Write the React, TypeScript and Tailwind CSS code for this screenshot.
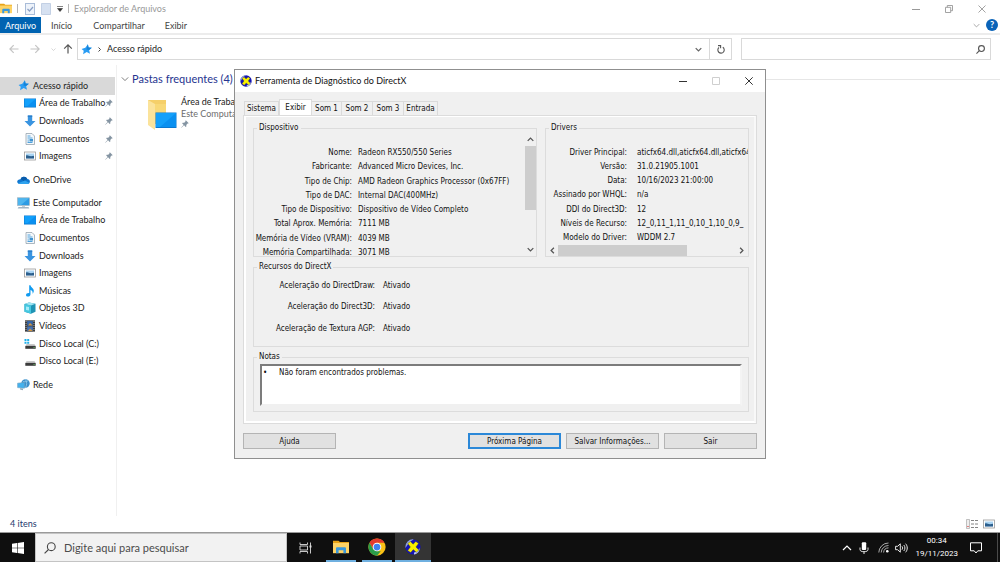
import type { ReactNode } from "react";

/* ---------- icons ---------- */

function StarIcon() {
  return (
    <svg viewBox="0 0 16 16" className="size-[11px] shrink-0">
      <path d="M10 .5 11 5l4.800.3-4 3.600 1.300 5.100-4.800-2.300L3 15l1-5.300L.8 7.200 6.300 5.600z" fill="#2a9df4" />
      <path d="M10 .5 11 5l4.800.3-4 3.600-4-1z" fill="#1583d8" />
    </svg>
  );
}

function DesktopIcon() {
  return (
    <svg viewBox="0 0 12 10" className="w-3 h-[10px] shrink-0">
      <rect x="0" y="0.500" width="12" height="9" fill="#0a78d0" />
      <path d="M.5 1h11v7.500H.5z" fill="#12a0fb" />
      <path d="M11.500 1v7.500H3z" fill="#0b8ff0" />
    </svg>
  );
}

function DownIcon() {
  return (
    <svg viewBox="0 0 12 12" className="size-3 shrink-0">
      <path d="M3.800.5h4.400V6H11.500L6 11.600.5 6h3.300z" fill="#3a94e0" />
      <path d="M3.800.5h4.400V2H3.800z" fill="#2b7fcb" />
    </svg>
  );
}

function DocIcon() {
  return (
    <svg viewBox="0 0 12 12" className="size-3 shrink-0">
      <path d="M2 .5h6L10.500 3v8.500H2z" fill="#f4f8fb" stroke="#8b99a5" strokeWidth=".7" />
      <path d="M3.500 3h3M3.500 5h5M3.500 9.500h5" stroke="#4ea1dc" strokeWidth="1" />
      <rect x="5.500" y="6" width="3.500" height="2.500" fill="#3f93d2" />
      <path d="M3.500 7h1.500M3.500 8.200h1.500" stroke="#4ea1dc" strokeWidth=".7" />
    </svg>
  );
}

function PictureIcon() {
  return (
    <svg viewBox="0 0 12 10" className="w-3 h-[10px] shrink-0">
      <rect x=".5" y="1" width="11" height="8" fill="#fff" stroke="#9a9a9a" strokeWidth=".8" />
      <rect x="2" y="2.500" width="8" height="5" fill="#a9d4f3" />
      <path d="M2 4.500c2-.8 3 .8 5 .8l3-.5v2.700H2z" fill="#2c5f8d" />
    </svg>
  );
}

function MusicIcon() {
  return (
    <svg viewBox="0 0 12 12" className="size-3 shrink-0">
      <path d="M5.200.3h1.300c.3 2.400 3.500 2.800 3.300 5.700 0 1.200-.6 2-1.200 2.700.3-2-.4-3.200-2.100-3.600V9.300c0 1.400-1.200 2.300-2.500 2.300-1.200 0-2-.7-2-1.600 0-1.200 1.200-2.200 3.200-2z" fill="#119bf0" />
    </svg>
  );
}

function CubeIcon() {
  return (
    <svg viewBox="0 0 12 12" className="size-3 shrink-0">
      <path d="M.5 2 5 .4l6.500 1.300v8L7 11.800.5 9.800z" fill="#1f93b4" />
      <path d="M.5 2 5 .4l6.500 1.300L7 3.400z" fill="#9fe4f2" />
      <path d="M.5 2 7 3.400v8.400L.5 9.800z" fill="#45c7e0" />
      <path d="M2 4.500 5 5v3.500L2 8z" fill="#a5ecf8" />
    </svg>
  );
}

function VideoIcon() {
  return (
    <svg viewBox="0 0 12 12" className="size-3 shrink-0">
      <rect x="1" y=".3" width="10" height="11.400" fill="#3d3d3d" />
      <rect x="3.200" y="1" width="5.600" height="4.600" fill="#3566a8" />
      <rect x="3.200" y="6.400" width="5.600" height="4.600" fill="#4573b5" />
      <path d="m4 5.600 2-2.500 2.800 2.500zM4 11l2-2.500L8.800 11z" fill="#d3953f" />
      <path d="M2 1v10.500M10 1v10.500" stroke="#c9c9c9" strokeWidth=".8" strokeDasharray="1 1" />
    </svg>
  );
}

function DiskIcon({ system = false }: { system?: boolean }) {
  return (
    <svg viewBox="0 0 12 12" className="size-3 shrink-0">
      {system && <path d="M.5 1h2v2h-2zM3.200 1h2v2h-2zM.5 3.700h2v2h-2zM3.200 3.700h2v2h-2z" fill="#1fb0ea" />}
      <path d="M2.500 6.300h8L11.700 8H1.300z" fill="#b9b9b9" />
      <path d="M1.300 8h10.400v2.800H1.300z" fill="#3c3c3c" />
      <path d="M9.500 9h1.200v.8H9.500z" fill="#63d663" />
    </svg>
  );
}

function CloudIcon() {
  return (
    <svg viewBox="0 0 13 10" className="w-[13px] h-[10px] shrink-0">
      <path d="M3.500 4.200A3.700 3.700 0 0 1 10.300 4c1.600.1 2.600 1.100 2.600 2.500 0 1.500-1.100 2.500-2.500 2.500H2.900C1.300 9 .2 8 .2 6.600c0-1.300 1.300-2.400 3.300-2.400z" fill="#1177cf" />
      <path d="M3.500 4.200A3.700 3.700 0 0 1 10.300 4L7 6z" fill="#0a5cab" />
      <path d="M1 8.200 8 5.500l4.500 2.400A2.500 2.500 0 0 1 10.400 9H2.900C2.100 9 1.400 8.700 1 8.200z" fill="#2ea2ee" />
    </svg>
  );
}

function ComputerIcon() {
  return (
    <svg viewBox="0 0 13 12" className="w-[13px] h-3 shrink-0">
      <rect x=".6" y=".8" width="11.800" height="7.600" fill="#4db5ef" stroke="#8fa8b8" strokeWidth=".6" />
      <path d="M12 1.200v6.900H4z" fill="#2c9be4" />
      <path d="M5 8.600h3v1.200H5z" fill="#b8c3cb" />
      <path d="M1.500 10h10l.8 1.400H.7z" fill="#9fb4c4" />
    </svg>
  );
}

function NetworkIcon() {
  return (
    <svg viewBox="0 0 13 12" className="w-[13px] h-3 shrink-0">
      <circle cx="8.500" cy="4.500" r="4.200" fill="#3d8fca" />
      <path d="M6 2.500c2 .5 4 0 5-.8M8.500.4c1.500 2.500 1.500 6 0 8.200" stroke="#9cd2ef" strokeWidth=".7" fill="none" />
      <path d="m.6 4.200 6.800-.8v5.800l-6.800-.6z" fill="#43b1ee" stroke="#6f9fc0" strokeWidth=".6" />
      <path d="m3 9.200 3 .4v1.600l-3-.6z" fill="#90a9ba" />
    </svg>
  );
}

function PinIcon() {
  return (
    <svg viewBox="0 0 10 10" className="size-2 shrink-0">
      <path d="M6 .3 9.700 4l-1 .5-.5-.1-1.600 1.700.1 1.900-.9.600-1.900-1.900L.6 9.700.3 9.400l3-3.300-1.900-1.900.7-.9 1.900.1 1.600-1.600-.1-.6z" fill="#8494a2" />
    </svg>
  );
}

function Chevron({ className, width = 1.2 }: { className: string; width?: number }) {
  return (
    <svg viewBox="0 0 10 10" className={`shrink-0 ${className}`} fill="none" stroke="currentColor" strokeWidth={width}>
      <path d="m1 3 4 4 4-4" />
    </svg>
  );
}

function Arrow({ className }: { className: string }) {
  return (
    <svg viewBox="0 0 10 10" className={`size-[10px] shrink-0 ${className}`} fill="none" stroke="currentColor" strokeWidth="1.200">
      <path d="M9.500 5H1M4.700 1.200.9 5l3.800 3.800" />
    </svg>
  );
}

function FolderIcon({ className }: { className: string }) {
  return (
    <svg viewBox="0 0 16 14" className={`shrink-0 ${className}`}>
      <path d="M0 .8h5.500L7 2h9v3H0z" fill="#e8a317" />
      <path d="M0 3h16v10.200H0z" fill="#fdd366" />
      <path d="M3 13.200V8.500c0-.8.500-1.300 1.300-1.300h7.400c.8 0 1.300.5 1.300 1.300v4.700h-2.600v-3H5.600v3z" fill="#3a98dc" />
    </svg>
  );
}

function DirectXIcon({ className }: { className: string }) {
  return (
    <svg viewBox="0 0 16 16" className={`shrink-0 ${className}`}>
      <circle cx="8" cy="8" r="7.600" fill="#1414b4" />
      <path d="M2.600 2.600a7.600 7.600 0 0 1 6-2.200C5 2 3 5 .5 9a7.600 7.600 0 0 1 2.100-6.400z" fill="#8fa2dc" />
      <path d="M9 13.500c2.500-.5 4.500-2 5.500-4.500.5 3-2 6-5.500 6.400z" fill="#b7c4ef" />
      <path d="M2.800 4.500 5.400 2.600 8.100 5.200l2.700-2.600 2.700 1.800-2.600 3.500 3 3.200-2.600 2.200-3-2.700-2.600 2.900-3-1.900 2.700-3.700z" fill="#f8f000" stroke="#3a3a10" strokeWidth=".3" />
    </svg>
  );
}

function ChromeIcon() {
  return (
    <svg viewBox="0 0 48 48" className="size-[18px]">
      <circle cx="24" cy="24" r="23" fill="#fbc116" />
      <path d="M4.100 12.500A23 23 0 0 1 43.900 12.500H24L14 29.700z" fill="#e33b2e" />
      <path d="M4.100 12.500 14 29.700 24 35.500h10L24 47A23 23 0 0 1 4.100 12.500z" fill="#2a9c4a" />
      <circle cx="24" cy="24" r="11.500" fill="#fff" />
      <circle cx="24" cy="24" r="9" fill="#3f82ee" />
    </svg>
  );
}

function Magnifier({ className, width = 1.1 }: { className: string; width?: number }) {
  return (
    <svg viewBox="0 0 12 12" className={`shrink-0 ${className}`} fill="none" stroke="currentColor" strokeWidth={width}>
      <circle cx="7.300" cy="4.700" r="3.900" />
      <path d="M4.500 7.500.6 11.400" />
    </svg>
  );
}

/* ---------- file explorer ---------- */

type NavEntry = { label: string; icon: ReactNode; pinned?: boolean; selected?: boolean; top?: boolean };

function NavRow({ label, icon, pinned, selected, top }: NavEntry) {
  return (
    <li className={`mr-[2px] flex min-h-0 items-center ${selected ? "bg-[#d9d9d9]" : ""}`}>
      <a
        href="#"
        className={`flex min-w-0 flex-1 items-center gap-[3px] leading-3 whitespace-nowrap ${top ? "pl-[17px]" : "pl-[23px]"}`}
      >
        <span className="flex w-[13px] shrink-0 justify-center">{icon}</span>
        {label}
      </a>
      {pinned && (
        <span className="mr-[2px]">
          <PinIcon />
        </span>
      )}
    </li>
  );
}

const quickAccess: NavEntry[] = [
  { label: "Acesso rápido", icon: <StarIcon />, selected: true, top: true },
  { label: "Área de Trabalho", icon: <DesktopIcon />, pinned: true },
  { label: "Downloads", icon: <DownIcon />, pinned: true },
  { label: "Documentos", icon: <DocIcon />, pinned: true },
  { label: "Imagens", icon: <PictureIcon />, pinned: true },
];

const computer: NavEntry[] = [
  { label: "Este Computador", icon: <ComputerIcon />, top: true },
  { label: "Área de Trabalho", icon: <DesktopIcon /> },
  { label: "Documentos", icon: <DocIcon /> },
  { label: "Downloads", icon: <DownIcon /> },
  { label: "Imagens", icon: <PictureIcon /> },
  { label: "Músicas", icon: <MusicIcon /> },
  { label: "Objetos 3D", icon: <CubeIcon /> },
  { label: "Vídeos", icon: <VideoIcon /> },
  { label: "Disco Local (C:)", icon: <DiskIcon system /> },
  { label: "Disco Local (E:)", icon: <DiskIcon /> },
];

function ExplorerHeader() {
  return (
    <header className="shrink-0">
      <div className="flex h-[17px] items-center text-[#999]">
        <FolderIcon className="h-[11px] w-3" />
        <span className="ml-[5px] h-[9px] w-px bg-[#b5b5b5]" />
        <svg viewBox="0 0 10 12" className="ml-[7px] h-3 w-[10px]">
          <rect x=".5" y=".5" width="9" height="11" fill="#eef3fa" stroke="#a9bcd8" />
          <path d="m2.500 6 2 2L8 4" fill="none" stroke="#8a9fc4" strokeWidth="1.200" />
        </svg>
        <svg viewBox="0 0 10 12" className="ml-[6px] h-3 w-[10px]">
          <path d="M.5.5h9v11h-9z" fill="#d6e1f1" stroke="#c3d0e4" />
        </svg>
        <svg viewBox="0 0 6 6" className="ml-[6px] size-[6px] text-[#333]">
          <path d="M0 .5h6M.5 2.500h5L3 5.500z" stroke="currentColor" strokeWidth=".6" fill="currentColor" />
        </svg>
        <span className="ml-[5px] h-[9px] w-px bg-[#b5b5b5]" />
        <h1 className="ml-[5px] text-[9px] leading-3">Explorador de Arquivos</h1>
        <div className="ml-auto flex pr-[2px]">
          <button aria-label="Minimizar" className="flex h-[15px] w-[33px] items-center justify-center">
            <svg viewBox="0 0 8 8" className="size-2" stroke="currentColor">
              <path d="M0 4.500h8" />
            </svg>
          </button>
          <button aria-label="Restaurar" className="flex h-[15px] w-[33px] items-center justify-center">
            <svg viewBox="0 0 8 8" className="size-2" stroke="currentColor" fill="none" strokeWidth=".9">
              <path d="M.5 2.300h5.200v5.200H.5zM2.300 2.300V.5h5.200v5.200H5.700" />
            </svg>
          </button>
          <button aria-label="Fechar" className="flex h-[15px] w-[33px] items-center justify-center">
            <svg viewBox="0 0 8 8" className="size-2" stroke="currentColor" strokeWidth=".9">
              <path d="m.5.5 7 7M7.500.5l-7 7" />
            </svg>
          </button>
        </div>
      </div>

      <nav className="flex h-[18px] items-stretch border-b-2 border-[#ececec] text-[9px] leading-3 text-[#444]">
        <button className="w-[41px] bg-[#0063b1] pt-px text-white">Arquivo</button>
        <button className="ml-[10px] pt-px">Início</button>
        <button className="ml-[21px] pt-px">Compartilhar</button>
        <button className="ml-5 pt-px">Exibir</button>
        <div className="ml-auto flex items-center gap-[6px] pr-[2px]">
          <Chevron className="size-[7px] text-[#999]" />
          <button aria-label="Ajuda" className="flex size-3 items-center justify-center rounded-full bg-[#0a63b8] text-[9px] font-bold text-white">
            ?
          </button>
        </div>
      </nav>

      <div className="flex items-center gap-[9px] pt-[3px] pr-[9px] pl-[9px]">
        <div className="flex w-[59px] shrink-0 items-center">
          <Arrow className="text-[#c4c4c4]" />
          <Arrow className="ml-[11px] rotate-180 text-[#c4c4c4]" />
          <Chevron className="ml-[11px] size-[5px] text-[#bdbdbd]" />
          <Arrow className="ml-[7px] rotate-90 text-[#555]" />
        </div>
        <div className="flex h-[22px] min-w-0 flex-1 items-stretch border border-[#d9d9d9]">
          <button className="flex items-center pl-[3px] text-[9px] leading-3 text-[#222]">
            <StarIcon />
            <Chevron className="mx-[5px] size-[5px] -rotate-90 text-[#444]" width={2} />
            Acesso rápido
          </button>
          <button aria-label="Locais anteriores" className="ml-auto flex w-[21px] items-center justify-center text-[#666]">
            <Chevron className="size-[7px]" width={1.8} />
          </button>
          <button aria-label="Atualizar" className="flex w-[22px] items-center justify-center border-l border-[#d9d9d9] text-[#555]">
            <svg viewBox="0 0 8 9" className="h-[9px] w-2" fill="none" stroke="currentColor" strokeWidth="1.100">
              <path d="M5.800 2.300A3.200 3.200 0 1 1 2 2.500M1 .6h2.600v2.700" />
            </svg>
          </button>
        </div>
        <label className="flex h-[22px] w-[250px] shrink-0 items-center border border-[#d9d9d9] pr-[5px] text-[#555]">
          <span className="sr-only">Pesquisar</span>
          <input type="search" className="min-w-0 flex-1 bg-transparent text-[9px] outline-none" />
          <Magnifier className="size-[9px]" width={1.5} />
        </label>
      </div>
    </header>
  );
}

function Explorer() {
  return (
    <main className="flex min-h-0 flex-1 flex-col bg-white">
      <ExplorerHeader />
      <div className="flex min-h-0 flex-1 pt-[5px]">
        <aside className="w-[117px] shrink-0 border-r border-[#f0f0f0] pt-3 text-[9px] text-[#222]">
          <div className="flex flex-col gap-[6px]">
            <ul className="grid h-[88px] auto-rows-fr">
              {quickAccess.map((e) => (
                <NavRow key={e.label} {...e} />
              ))}
            </ul>
            <ul className="grid h-[17px]">
              <NavRow label="OneDrive" icon={<CloudIcon />} top />
            </ul>
            <ul className="grid h-[176px] auto-rows-fr">
              {computer.map((e) => (
                <NavRow key={e.label} {...e} />
              ))}
            </ul>
            <ul className="grid h-[17px]">
              <NavRow label="Rede" icon={<NetworkIcon />} top />
            </ul>
          </div>
        </aside>
        <section className="min-w-0 flex-1 pt-[7px] pl-1">
          <h2 className="flex items-center gap-[3px] text-[11px] leading-[14px] text-[#26348f]">
            <Chevron className="size-2 text-[#777]" />
            Pastas frequentes (4)
            <span className="ml-1 h-px flex-1 bg-[#e6e6e6]" />
          </h2>
          <a href="#" className="mt-[10px] ml-[26px] flex gap-1 text-[9px] leading-3">
            <svg viewBox="0 0 30 36" className="h-9 w-[30px]">
              <path d="M1 4h18v24H1z" fill="#f5cf69" />
              <path d="M1 4 8 8v26l-7-5z" fill="#fbe39b" />
              <path d="M8 8h11v20H8z" fill="#f8d877" />
              <path d="M8.500 16.500h21V32h-21z" fill="#0a78d0" />
              <path d="M9 17h20v14H9z" fill="#14a0fa" />
              <path d="M29 17v14H13z" fill="#0a90f0" />
            </svg>
            <span className="flex flex-col">
              <span className="text-[#222]">Área de Trabalho</span>
              <span className="text-[#6d6d6d]">Este Computador</span>
              <PinIcon />
            </span>
          </a>
        </section>
      </div>
      <footer className="flex h-4 shrink-0 items-center justify-between pr-[5px] pl-[10px] text-[9px] leading-3 text-[#1e3a6e]">
        4 itens
        <span className="flex gap-[5px]">
          <svg viewBox="0 0 12 10" className="h-[10px] w-3">
            <path d="M.5.500h3v9h-3z" fill="#eee" stroke="#a8a8a8" strokeWidth=".7" />
            <path d="M5 1.500h3M5 5h3M5 8.500h3M9 1.500h3M9 5h3M9 8.500h3" stroke="#777" strokeWidth=".9" />
            <path d="M1.200 7.500h1.600" stroke="#d66" />
          </svg>
          <PictureIcon />
        </span>
      </footer>
    </main>
  );
}

/* ---------- DirectX diagnostic tool ---------- */

const device: [string, string][] = [
  ["Nome:", "Radeon RX550/550 Series"],
  ["Fabricante:", "Advanced Micro Devices, Inc."],
  ["Tipo de Chip:", "AMD Radeon Graphics Processor (0x67FF)"],
  ["Tipo de DAC:", "Internal DAC(400MHz)"],
  ["Tipo de Dispositivo:", "Dispositivo de Vídeo Completo"],
  ["Total Aprox. Memória:", "7111 MB"],
  ["Memória de Vídeo (VRAM):", "4039 MB"],
  ["Memória Compartilhada:", "3071 MB"],
];

const drivers: [string, string][] = [
  ["Driver Principal:", "aticfx64.dll,aticfx64.dll,aticfx64"],
  ["Versão:", "31.0.21905.1001"],
  ["Data:", "10/16/2023 21:00:00"],
  ["Assinado por WHQL:", "n/a"],
  ["DDI do Direct3D:", "12"],
  ["Níveis de Recurso:", "12_0,11_1,11_0,10_1,10_0,9_"],
  ["Modelo do Driver:", "WDDM 2.7"],
];

const features: [string, string][] = [
  ["Aceleração do DirectDraw:", "Ativado"],
  ["Aceleração do Direct3D:", "Ativado"],
  ["Aceleração de Textura AGP:", "Ativado"],
];

type RowsProps = { rows: [string, string][]; className: string; labelClass: string; valueClass: string };

function Rows({ rows, className, labelClass, valueClass }: RowsProps) {
  return (
    <table className={`leading-[10px] ${className}`}>
      <tbody>
        {rows.map(([label, value]) => (
          <tr key={label}>
            <th scope="row" className={`p-0 text-right font-normal ${labelClass}`}>{label}</th>
            <td className={`p-0 ${valueClass}`}>{value}</td>
          </tr>
        ))}
      </tbody>
    </table>
  );
}

function Group({ title, className, children }: { title: string; className: string; children: ReactNode }) {
  return (
    <fieldset className={`min-w-0 border border-[#dcdcdc] ${className}`}>
      <legend className="ml-[3px] px-[2px] leading-[10px]">{title}</legend>
      {children}
    </fieldset>
  );
}

const tabs = [
  { label: "Sistema", width: "w-[35px]" },
  { label: "Exibir", width: "w-[33px]" },
  { label: "Som 1", width: "w-[30px]" },
  { label: "Som 2", width: "w-[31px]" },
  { label: "Som 3", width: "w-[31px]" },
  { label: "Entrada", width: "w-[34px]" },
];

function DxButton({ children, primary }: { children: ReactNode; primary?: boolean }) {
  return (
    <button
      className={`flex h-4 w-[93px] items-center justify-center bg-[#e1e1e1] pt-px leading-3 ${primary ? "border-2 border-[#2b88d8]" : "border border-[#b4b4b4]"}`}
    >
      {children}
    </button>
  );
}

function DxDiag() {
  return (
    <div
      role="dialog"
      aria-labelledby="dx-title"
      className="absolute top-[69px] left-[234px] flex h-[390px] w-[532px] flex-col border border-[#8f8f8f] bg-[#f0f0f0] text-[8px] whitespace-nowrap text-[#111] [font-family:'DejaVu_Sans_Condensed','DejaVu_Sans',sans-serif]"
    >
      <div className="flex h-[22px] shrink-0 items-center bg-white pl-[5px]">
        <DirectXIcon className="size-3" />
        <h2 id="dx-title" className="ml-[3px] text-[9px] leading-3 [font-family:Lato,sans-serif]">
          Ferramenta de Diagnóstico do DirectX
        </h2>
        <div className="ml-auto flex text-[#333]">
          <button aria-label="Minimizar" className="flex h-5 w-[33px] items-center justify-center">
            <svg viewBox="0 0 8 8" className="size-2" stroke="currentColor">
              <path d="M0 4.500h8" />
            </svg>
          </button>
          <button aria-label="Maximizar" disabled className="flex h-5 w-[33px] items-center justify-center text-[#cfcfcf]">
            <svg viewBox="0 0 8 8" className="size-2" stroke="currentColor" fill="none">
              <path d="M.5.500h7v7h-7z" />
            </svg>
          </button>
          <button aria-label="Fechar" className="flex h-5 w-[33px] items-center justify-center">
            <svg viewBox="0 0 8 8" className="size-2" stroke="currentColor">
              <path d="m.3.300 7.400 7.400M7.700.3.300 7.700" />
            </svg>
          </button>
        </div>
      </div>

      <div className="flex min-h-0 flex-1 flex-col px-2 pt-[7px] pb-[9px]">
        <div role="tablist" className="flex items-end pl-px">
          {tabs.map((t) =>
            t.label === "Exibir" ? (
              <button key={t.label} role="tab" aria-selected="true" className={`h-4 border border-b-0 border-[#dcdcdc] bg-white leading-[14px] ${t.width}`}>
                {t.label}
              </button>
            ) : (
              <button key={t.label} role="tab" aria-selected="false" className={`h-[14px] border border-b-0 border-l-0 border-[#dadada] leading-3 first:border-l ${t.width}`}>
                {t.label}
              </button>
            ),
          )}
        </div>

        <div role="tabpanel" className="flex min-h-0 flex-1 flex-col border border-[#dcdcdc]">
          <div className="flex min-h-0 flex-1 flex-col border-2 border-t border-white border-r-[#f8f8f8] pt-[6px] pr-[5px] pb-[9px] pl-[7px]">
            <div className="flex h-[134px] shrink-0 gap-2">
              <Group title="Dispositivo" className="flex-1">
                <div className="flex h-[123px] overflow-hidden">
                  <div className="min-w-0 flex-1 overflow-hidden pt-[13px]">
                    <Rows rows={device} className="h-[114px]" labelClass="min-w-[98px]" valueClass="pl-[6px]" />
                  </div>
                  <div className="flex w-3 shrink-0 flex-col items-center pb-[3px] text-[#555]">
                    <Chevron className="my-[3px] size-[7px] rotate-180" width={1.8} />
                    <div className="h-16 w-[11px] bg-[#cdcdcd]" />
                    <Chevron className="mt-auto size-[7px]" width={1.8} />
                  </div>
                </div>
              </Group>
              <Group title="Drivers" className="w-[204px]">
                <div className="flex h-[123px] flex-col overflow-hidden">
                  <div className="min-h-0 flex-1 overflow-hidden pt-[13px]">
                    <Rows rows={drivers} className="h-[99px]" labelClass="min-w-[81px]" valueClass="pl-[10px]" />
                  </div>
                  <div className="flex h-[11px] shrink-0 items-center px-[3px] text-[#555]">
                    <Chevron className="size-[7px] rotate-90" width={1.8} />
                    <div className="ml-[2px] h-[11px] w-[129px] bg-[#cdcdcd]" />
                    <Chevron className="ml-auto size-[7px] -rotate-90" width={1.8} />
                  </div>
                </div>
              </Group>
            </div>
            <Group title="Recursos do DirectX" className="mt-[5px] h-[85px] shrink-0">
              <Rows rows={features} className="mt-[3px] h-[65px]" labelClass="min-w-[121px]" valueClass="pl-2" />
            </Group>
            <Group title="Notas" className="mt-[5px] h-[60px] shrink-0">
              <label htmlFor="notes" className="sr-only">Notas</label>
              <div className="px-[6px] pt-[2px]">
                <textarea
                  id="notes"
                  readOnly
                  defaultValue={"•\tNão foram encontrados problemas."}
                  className="block h-[42px] w-full resize-none overflow-hidden border-2 border-[#7c7c7c] border-r-[#f4f4f4] border-b-[#f0f0f0] bg-white pt-px pl-px leading-3 outline-none [tab-size:16px]"
                />
              </div>
            </Group>
          </div>
        </div>

        <div className="mt-[9px] flex gap-[5px]">
          <DxButton>Ajuda</DxButton>
          <span className="flex-1" />
          <DxButton primary>Próxima Página</DxButton>
          <DxButton>Salvar Informações...</DxButton>
          <DxButton>Sair</DxButton>
        </div>
      </div>
    </div>
  );
}

/* ---------- taskbar ---------- */

function TaskButton({ label, children, active }: { label: string; children: ReactNode; active?: boolean }) {
  return (
    <button aria-label={label} className={`flex w-9 flex-col items-center ${active ? "bg-[#343434]" : ""}`}>
      <span className="flex flex-1 items-center">{children}</span>
      <span className={`h-[2px] bg-[#6fb0e0] ${active ? "w-full" : "w-[30px]"}`} />
    </button>
  );
}

function Taskbar() {
  return (
    <div className="flex h-[30px] shrink-0 items-stretch border-t border-[#9a9a9a] bg-[#0f0f0f] text-white">
      <button aria-label="Iniciar" className="flex w-[35px] shrink-0 items-center justify-center">
        <svg viewBox="0 0 12 12" className="size-3" fill="#fff">
          <path d="M0 1.700 5 1v4.700H0zM5.600.9 12 0v5.700H5.600zM0 6.300h5V11l-5-.7zM5.600 6.300H12V12l-6.400-.9z" />
        </svg>
      </button>
      <label className="flex w-[252px] shrink-0 items-center gap-2 border border-[#c4c4c4] bg-[#f2f2f2] pl-2 text-[#444]">
        <Magnifier className="size-3" />
        <span className="sr-only">Pesquisa</span>
        <input type="text" placeholder="Digite aqui para pesquisar" className="min-w-0 flex-1 bg-transparent text-[11px] leading-4 outline-none placeholder:text-[#4c4c4c]" />
      </label>
      <button aria-label="Visão de tarefas" className="flex w-9 shrink-0 items-center justify-center">
        <svg viewBox="0 0 13 12" className="h-3 w-[13px]" fill="none" stroke="#ddd" strokeWidth=".9">
          <path d="M1 .5v2h7.500v-2M1 11.500v-2h7.500v2M1 4h7.500v4H1zM11.500.5v11" />
          <path d="M10.500 3.500h2v2h-2z" fill="#ddd" stroke="none" />
        </svg>
      </button>
      <TaskButton label="Explorador de Arquivos">
        <FolderIcon className="h-[14px] w-4" />
      </TaskButton>
      <TaskButton label="Google Chrome">
        <ChromeIcon />
      </TaskButton>
      <TaskButton label="Ferramenta de Diagnóstico do DirectX" active>
        <DirectXIcon className="size-4" />
      </TaskButton>

      <div className="ml-auto flex items-center">
        <Chevron className="size-[10px] rotate-180" />
        <svg viewBox="0 0 10 12" className="ml-[7px] h-3 w-[10px]" fill="none" stroke="#fff">
          <rect x="2.800" y=".3" width="4.400" height="7.700" rx="1" fill="#fff" stroke="none" />
          <path d="M1 5.500v2C1 9 2.500 9.700 5 9.700S9 9 9 7.500v-2M5 9.700V12" strokeWidth=".9" />
        </svg>
        <svg viewBox="0 0 11 11" className="ml-[9px] size-[11px]" fill="none" stroke="#bbb" strokeWidth=".9">
          <path d="M.8 10.500A9.700 9.700 0 0 1 10.500 1M3.200 10.500a7.300 7.300 0 0 1 7.300-7M5.600 10.500a5 5 0 0 1 4.900-4.600" />
          <circle cx="9.300" cy="9.300" r="1.300" fill="#fff" stroke="none" />
        </svg>
        <svg viewBox="0 0 13 12" className="ml-[6px] h-3 w-[13px]" fill="none" stroke="#fff" strokeWidth=".9">
          <path d="M.6 4.300h2L5.300 1.800v8.400L2.600 7.700h-2zM7 4.300c.8 1 .8 2.400 0 3.400M8.800 3c1.500 1.800 1.500 4.200 0 6M10.600 1.700c2.200 2.500 2.200 6.100 0 8.600" />
        </svg>
        <div className="mr-3 ml-[7px] pb-[2px] text-center text-[8px] leading-[13px] [font-family:Roboto,sans-serif]">
          <div>00:34</div>
          <div>19/11/2023</div>
        </div>
        <svg viewBox="0 0 12 12" className="size-3" fill="none" stroke="#fff">
          <path d="M.5.800h11v8H7.800L6 11 4.200 8.800H.5z" />
        </svg>
        <span className="mr-[2px] ml-[15px] h-[29px] w-px bg-[#4a4a4a]" />
      </div>
    </div>
  );
}

export default function App() {
  return (
    <div className="relative flex h-screen flex-col overflow-hidden [font-family:Lato,sans-serif] [font-variant-ligatures:none]">
      <Explorer />
      <DxDiag />
      <Taskbar />
    </div>
  );
}
